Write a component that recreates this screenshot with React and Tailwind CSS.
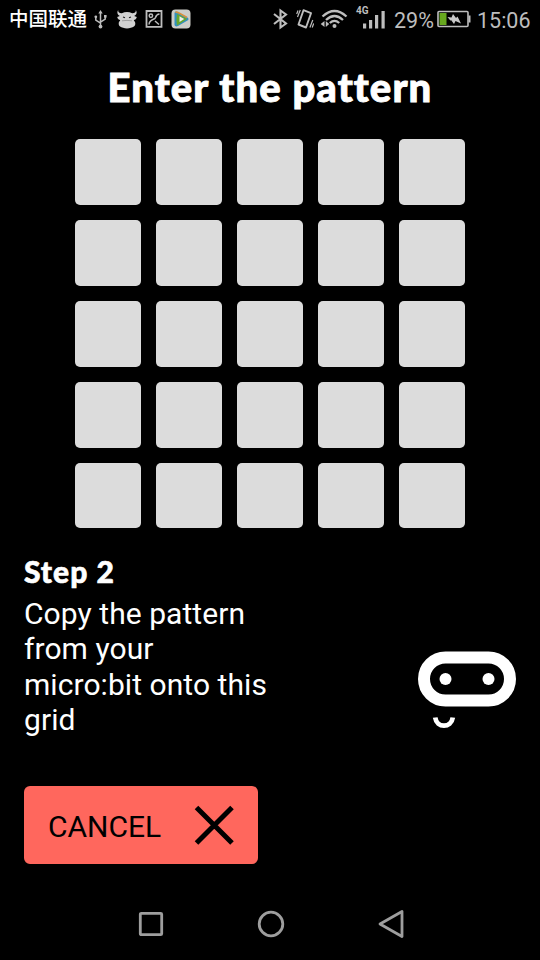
import React from "react";

function UsbIcon() {
  return (
    <svg className="ml-[7px] h-[19px] w-[13px]" viewBox="0 0 13 19" fill="none" stroke="#bdbdbd" strokeWidth="1.500">
      <path d="M6.500 2v14M1.800 7v3.200l4.700 3M11.200 6v3.200l-4.700 3" />
      <path d="M6.500 0l2.200 3.600H4.300z" fill="#bdbdbd" stroke="none" />
      <circle cx="6.500" cy="16.600" r="1.900" fill="#bdbdbd" stroke="none" />
      <circle cx="1.800" cy="6.800" r="1.400" fill="#bdbdbd" stroke="none" />
      <path d="M10 5h2.600v2.600H10z" fill="#bdbdbd" stroke="none" />
    </svg>
  );
}

function BullIcon() {
  return (
    <svg className="ml-[10px] h-[19px] w-[20px]" viewBox="0 0 20 19">
      <path
        d="M1.200 0C1 2 2.300 3.300 4.800 3.200Q10 .800 15.200 3.200C17.700 3.300 19 2 18.800 0 20.400 2.500 19.600 5 17.200 6l2.600 1c-.4 2-1.600 2.900-3 3l.4 1c1.600 1.200 1.400 4.400-.3 5.600-3 2.400-10.800 2.400-13.800 0-1.700-1.200-1.900-4.400-.3-5.600L3.200 10C2 9.900.6 9 .2 7l2.600-1C.4 5-.4 2.500 1.200 0z"
        fill="#d2d2d2"
      />
      <path d="M6 7l2 .8M14 7l-2 .8" stroke="#222" strokeWidth="1.100" fill="none" />
      <path d="M5 10.800q5-.8 10 0" stroke="#888" strokeWidth=".7" fill="none" />
    </svg>
  );
}

function PictureIcon() {
  return (
    <svg className="ml-[8px] h-[18px] w-[18px]" viewBox="0 0 18 18" fill="none" stroke="#bdbdbd" strokeWidth="1.800">
      <path d="M1.500 1h15v15.800h-15z" />
      <circle cx="5.900" cy="5.700" r="1.700" strokeWidth="1.500" />
      <path d="M4 14.500C4.500 8.500 9.500 10.500 10.500 7.500 11.200 5.200 12 4.200 14.500 4M10 11l4 3.500" strokeWidth="1.500" />
    </svg>
  );
}

function VideoIcon() {
  return (
    <svg className="ml-2 h-5 w-5" viewBox="0 0 20 20">
      <rect x=".5" y=".5" width="19" height="19" rx="4" fill="#cdcdc8" />
      <path d="M3.500 3.800Q4.500 1.800 7 3.200L16.500 8.400Q18.500 10 16.500 11.600L7 17Q4.300 18.300 3.500 16z" fill="#3290bd" />
      <path d="M4.500 3.600Q5.500 2.500 7.500 3.700L16 8.500" stroke="#d9903b" strokeWidth="1.600" fill="none" />
      <path d="M6 5l10 5-10 6.500q-1.200-5.500 0-11.500z" fill="#67a62b" />
      <path d="M8.500 7.200l4.700 2.800-4.700 3z" fill="#eee" />
    </svg>
  );
}

function BluetoothIcon() {
  return (
    <svg className="h-[22px] w-[17px]" viewBox="0 0 17 22" fill="none" stroke="#bdbdbd" strokeWidth="2.100">
      <path d="M2 6l12 9.500-5.500 4V2.500l5.500 4L2 16" />
    </svg>
  );
}

function VibrateIcon() {
  return (
    <svg className="ml-[7px] h-5 w-[18px]" viewBox="0 0 18 20" fill="none" stroke="#bdbdbd">
      <path d="M7.500 1.200l7.500 3-5 14.300-7.500-3z" strokeWidth="1.900" strokeLinejoin="round" />
      <path d="M4.300 1L1.500 8M2 1.500L.7 5M16.800 11l-2.900 7.500M17.700 14.500l-1.500 4" strokeWidth="1.200" />
    </svg>
  );
}

function WifiIcon() {
  return (
    <svg className="ml-[6px] h-5 w-[28px]" viewBox="0 0 28 20" fill="none" stroke="#bdbdbd" strokeWidth="2.300">
      <path d="M2.500 7.500Q14.500-3.500 26.500 7.500M6 11Q14.500 3 23 11M9.800 14Q14.500 9.800 19.200 14" />
      <circle cx="14.500" cy="17" r="2" fill="#bdbdbd" stroke="none" />
      <path d="M4.500 12v6L.7 15zM5.800 12v6l3.400-3z" fill="#bdbdbd" stroke="none" />
    </svg>
  );
}

function SignalIcon() {
  return (
    <div className="relative ml-[8px] h-[22px] w-[29px]">
      <span className="absolute left-0 top-[-2px] text-[10px] font-bold leading-none">4G</span>
      <svg className="mt-[-1px] h-[22px] w-[29px]" viewBox="0 0 29 22" fill="#bdbdbd">
        <rect x="7" y="16.500" width="3.200" height="5" />
        <rect x="13" y="13" width="3.200" height="8.500" />
        <rect x="19" y="8" width="3.200" height="13.500" />
        <rect x="25.500" y="4" width="3.200" height="17.500" />
      </svg>
    </div>
  );
}

function BatteryIcon() {
  return (
    <svg className="ml-[3px] h-[18px] w-[34px]" viewBox="0 0 34 18">
      <rect x="1" y="1.500" width="30" height="15" rx="1" fill="none" stroke="#bdbdbd" strokeWidth="1.600" />
      <path d="M31.500 5.500h2v7h-2z" fill="#bdbdbd" />
      <path d="M2.500 3h7v12h-7z" fill="#67a81e" />
      <path d="M10.500 7l4 .5 1.500-3.500 3 4 1.500-1.500 3.500 7-5.500-2.500-1.500 3-3-4-.5.800z" fill="#c9c9c9" />
    </svg>
  );
}

function StatusBar() {
  return (
    <header className="flex h-[38px] items-center pl-[9px] pr-[10px] text-[#bdbdbd]">
      <span className="w-[78px] whitespace-nowrap pb-[2px] font-['Noto_Sans_CJK_SC',sans-serif] text-[19.500px] font-medium leading-none text-white">
        中国联通
      </span>
      <UsbIcon />
      <BullIcon />
      <PictureIcon />
      <VideoIcon />
      <div className="ml-auto flex items-center">
        <BluetoothIcon />
        <VibrateIcon />
        <WifiIcon />
        <SignalIcon />
        <span className="ml-[9px] w-[40px] whitespace-nowrap pt-[3px] text-[21.500px] leading-none">29%</span>
        <BatteryIcon />
        <span className="ml-[6px] w-[53px] whitespace-nowrap pt-[3px] text-[21.500px] leading-none">15:06</span>
      </div>
    </header>
  );
}

function PatternGrid() {
  return (
    <div className="mx-auto grid h-[389px] w-[390px] grid-cols-5 grid-rows-[66px_66px_66px_66px_65px] gap-[15px]">
      {Array.from({ length: 25 }, (_, i) => (
        <button key={i} aria-label={`LED ${i + 1}`} className="rounded-[5px] bg-[#dcdcdc]" />
      ))}
    </div>
  );
}

function MicrobitFace() {
  return (
    <svg className="h-[78px] w-[98px]" viewBox="0 0 98 78" fill="none" stroke="#fff">
      <rect x="6" y="6.500" width="86" height="43" rx="21.500" strokeWidth="12" />
      <circle cx="27.500" cy="28" r="6" fill="#fff" stroke="none" />
      <circle cx="70.500" cy="28" r="6" fill="#fff" stroke="none" />
      <path d="M17.200 66.500c1.500 10.800 16 10.800 17.600 0" strokeWidth="4.800" />
    </svg>
  );
}

function NavigationBar() {
  return (
    <nav className="mt-[44px] flex h-8 items-center pl-[138px]">
      <svg className="h-[26px] w-[26px]" viewBox="0 0 26 26" fill="none" stroke="#9e9e9e" strokeWidth="2.800">
        <rect x="2.300" y="2.300" width="21.400" height="21.400" rx="1" />
      </svg>
      <svg className="ml-[93px] h-7 w-7" viewBox="0 0 28 28" fill="none" stroke="#9e9e9e" strokeWidth="2.800">
        <circle cx="14" cy="14" r="11.800" />
      </svg>
      <svg className="ml-[92px] h-[30px] w-[28px]" viewBox="0 0 28 30" fill="none" stroke="#9e9e9e" strokeWidth="2.800" strokeLinejoin="round">
        <path d="M25 2.500v25L3 15z" />
      </svg>
    </nav>
  );
}

export default function App() {
  return (
    <div className="flex h-[960px] w-[540px] flex-col overflow-hidden bg-black font-['Roboto',sans-serif] text-white">
      <StatusBar />
      <h1 className="flex h-[101px] items-center justify-center whitespace-nowrap pb-[3px] font-['Lato',sans-serif] text-[40px] font-black leading-none tracking-[1.100px] [-webkit-text-stroke:0.9px_white]">
        Enter the pattern
      </h1>
      <PatternGrid />
      <section className="mt-[26px] flex h-[184px] items-end justify-between px-6">
        <div className="h-full w-[248px]">
          <h2 className="h-[42px] font-['Lato',sans-serif] text-[30px] font-black leading-[34px] tracking-[1px] [-webkit-text-stroke:0.6px_white]">
            Step 2
          </h2>
          <p className="text-[30px] leading-[35.300px] tracking-[0.060px]">Copy the pattern from your micro:bit onto this grid</p>
        </div>
        <div className="mb-[9px]">
          <MicrobitFace />
        </div>
      </section>
      <button className="ml-6 mt-12 flex h-[78px] w-[234px] items-center justify-between rounded-[6px] bg-[#ff675d] pl-6 pr-[24px] text-black">
        <span className="pt-1 text-[30px] leading-none">CANCEL</span>
        <svg className="h-10 w-10" viewBox="0 0 40 40" fill="none" stroke="#000" strokeWidth="5">
          <path d="M2.500 2.500l35.500 35.500M38 2.500L2.500 38" />
        </svg>
      </button>
      <NavigationBar />
    </div>
  );
}
